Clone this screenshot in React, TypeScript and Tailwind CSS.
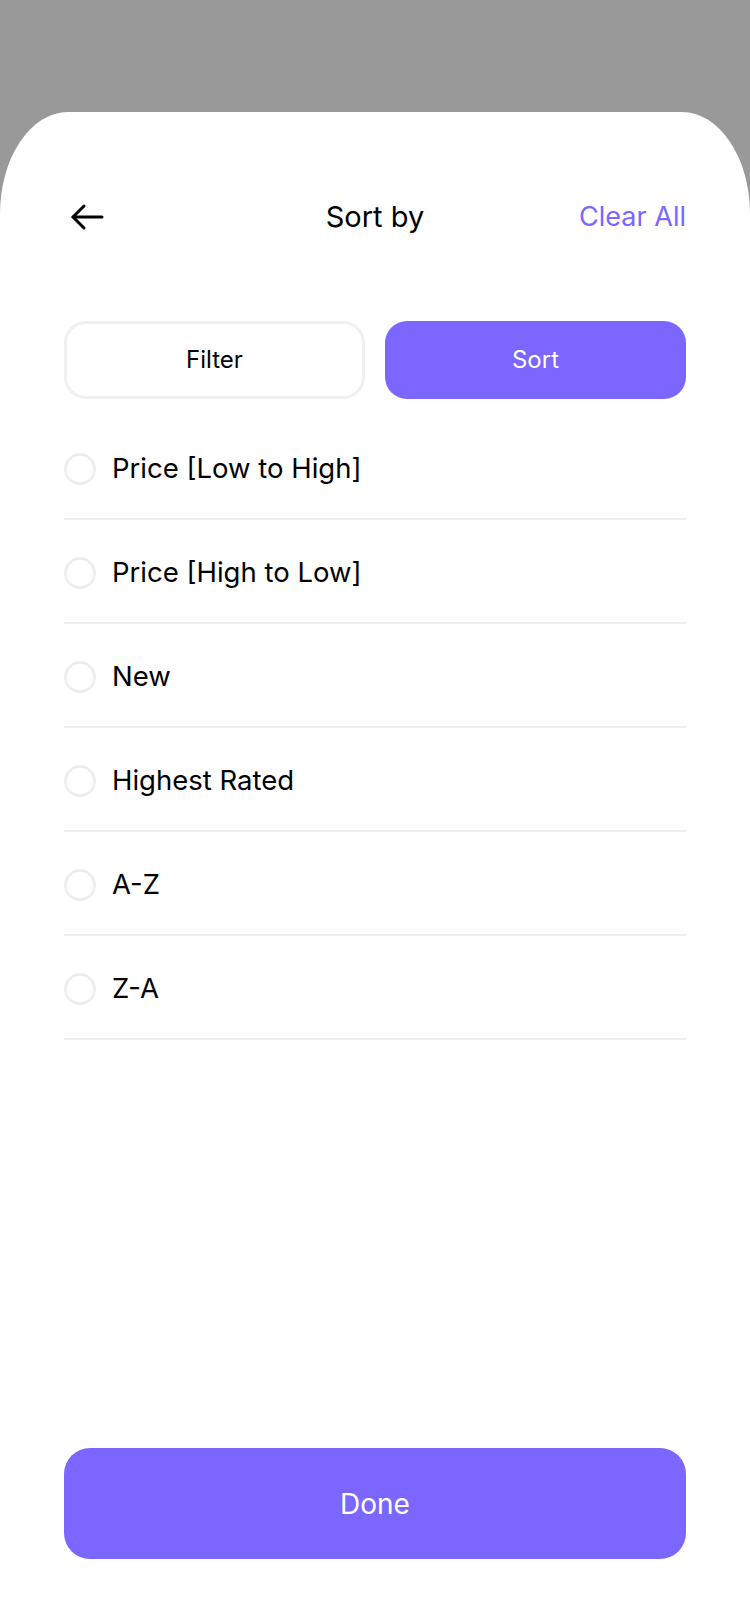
import { useState } from 'react';

const options = [
  'Price [Low to High]',
  'Price [High to Low]',
  'New',
  'Highest Rated',
  'A-Z',
  'Z-A',
];

export default function App() {
  const [tab, setTab] = useState<'filter' | 'sort'>('sort');
  const [selected, setSelected] = useState<number | null>(null);

  return (
    <div className="min-h-[1624px] w-[750px] bg-[#999999] pt-[112px] font-['Inter',sans-serif]">
      <div className="flex min-h-[1512px] flex-col bg-white px-[64px] rounded-tl-[68px_102px] rounded-tr-[68px_102px]">
        {/* Header */}
        <div className="mt-[83px] grid h-[40px] grid-cols-[1fr_auto_1fr] items-center">
          <button className="flex h-[40px] w-[40px] items-center pl-[6px] text-black">
            <svg width="34" height="30" viewBox="0 0 34 30" fill="none" stroke="currentColor" strokeWidth="3" strokeLinecap="round" strokeLinejoin="round">
              <path d="M32 15H3" />
              <path d="M14 4L3 15l11 11" />
            </svg>
          </button>
          <h1 className="text-[29px] font-normal text-black">Sort by</h1>
          <button className="justify-self-end text-[27px] text-[#7b66ff]">Clear All</button>
        </div>

        {/* Tabs */}
        <div className="mt-[86px] grid grid-cols-2 gap-[20px]">
          <button
            onClick={() => setTab('filter')}
            className={
              tab === 'filter'
                ? 'h-[78px] rounded-[22px] bg-[#7b66ff] text-[24px] text-white'
                : 'h-[78px] rounded-[22px] border-[3px] border-[#f0f0f0] bg-white text-[24px] text-black'
            }
          >
            Filter
          </button>
          <button
            onClick={() => setTab('sort')}
            className={
              tab === 'sort'
                ? 'h-[78px] rounded-[22px] bg-[#7b66ff] text-[24px] text-white'
                : 'h-[78px] rounded-[22px] border-[3px] border-[#f0f0f0] bg-white text-[24px] text-black'
            }
          >
            Sort
          </button>
        </div>

        {/* Options */}
        <ul className="mt-[17px]">
          {options.map((label, i) => (
            <li
              key={label}
              onClick={() => setSelected(i)}
              className="flex h-[104px] cursor-pointer items-center gap-[16px] border-b-2 border-[#eeeeee] pt-[4px]"
            >
              <span
                className={
                  selected === i
                    ? 'h-[32px] w-[32px] rounded-full border-[9px] border-[#7b66ff]'
                    : 'h-[32px] w-[32px] rounded-full border-[3px] border-[#eeeeee]'
                }
              />
              <span className="text-[27.5px] text-black">{label}</span>
            </li>
          ))}
        </ul>

        <div className="flex-1" />

        {/* Done */}
        <button className="mb-[65px] h-[111px] w-full rounded-[26px] bg-[#7b66ff] text-[28px] text-white">
          Done
        </button>
      </div>
    </div>
  );
}
